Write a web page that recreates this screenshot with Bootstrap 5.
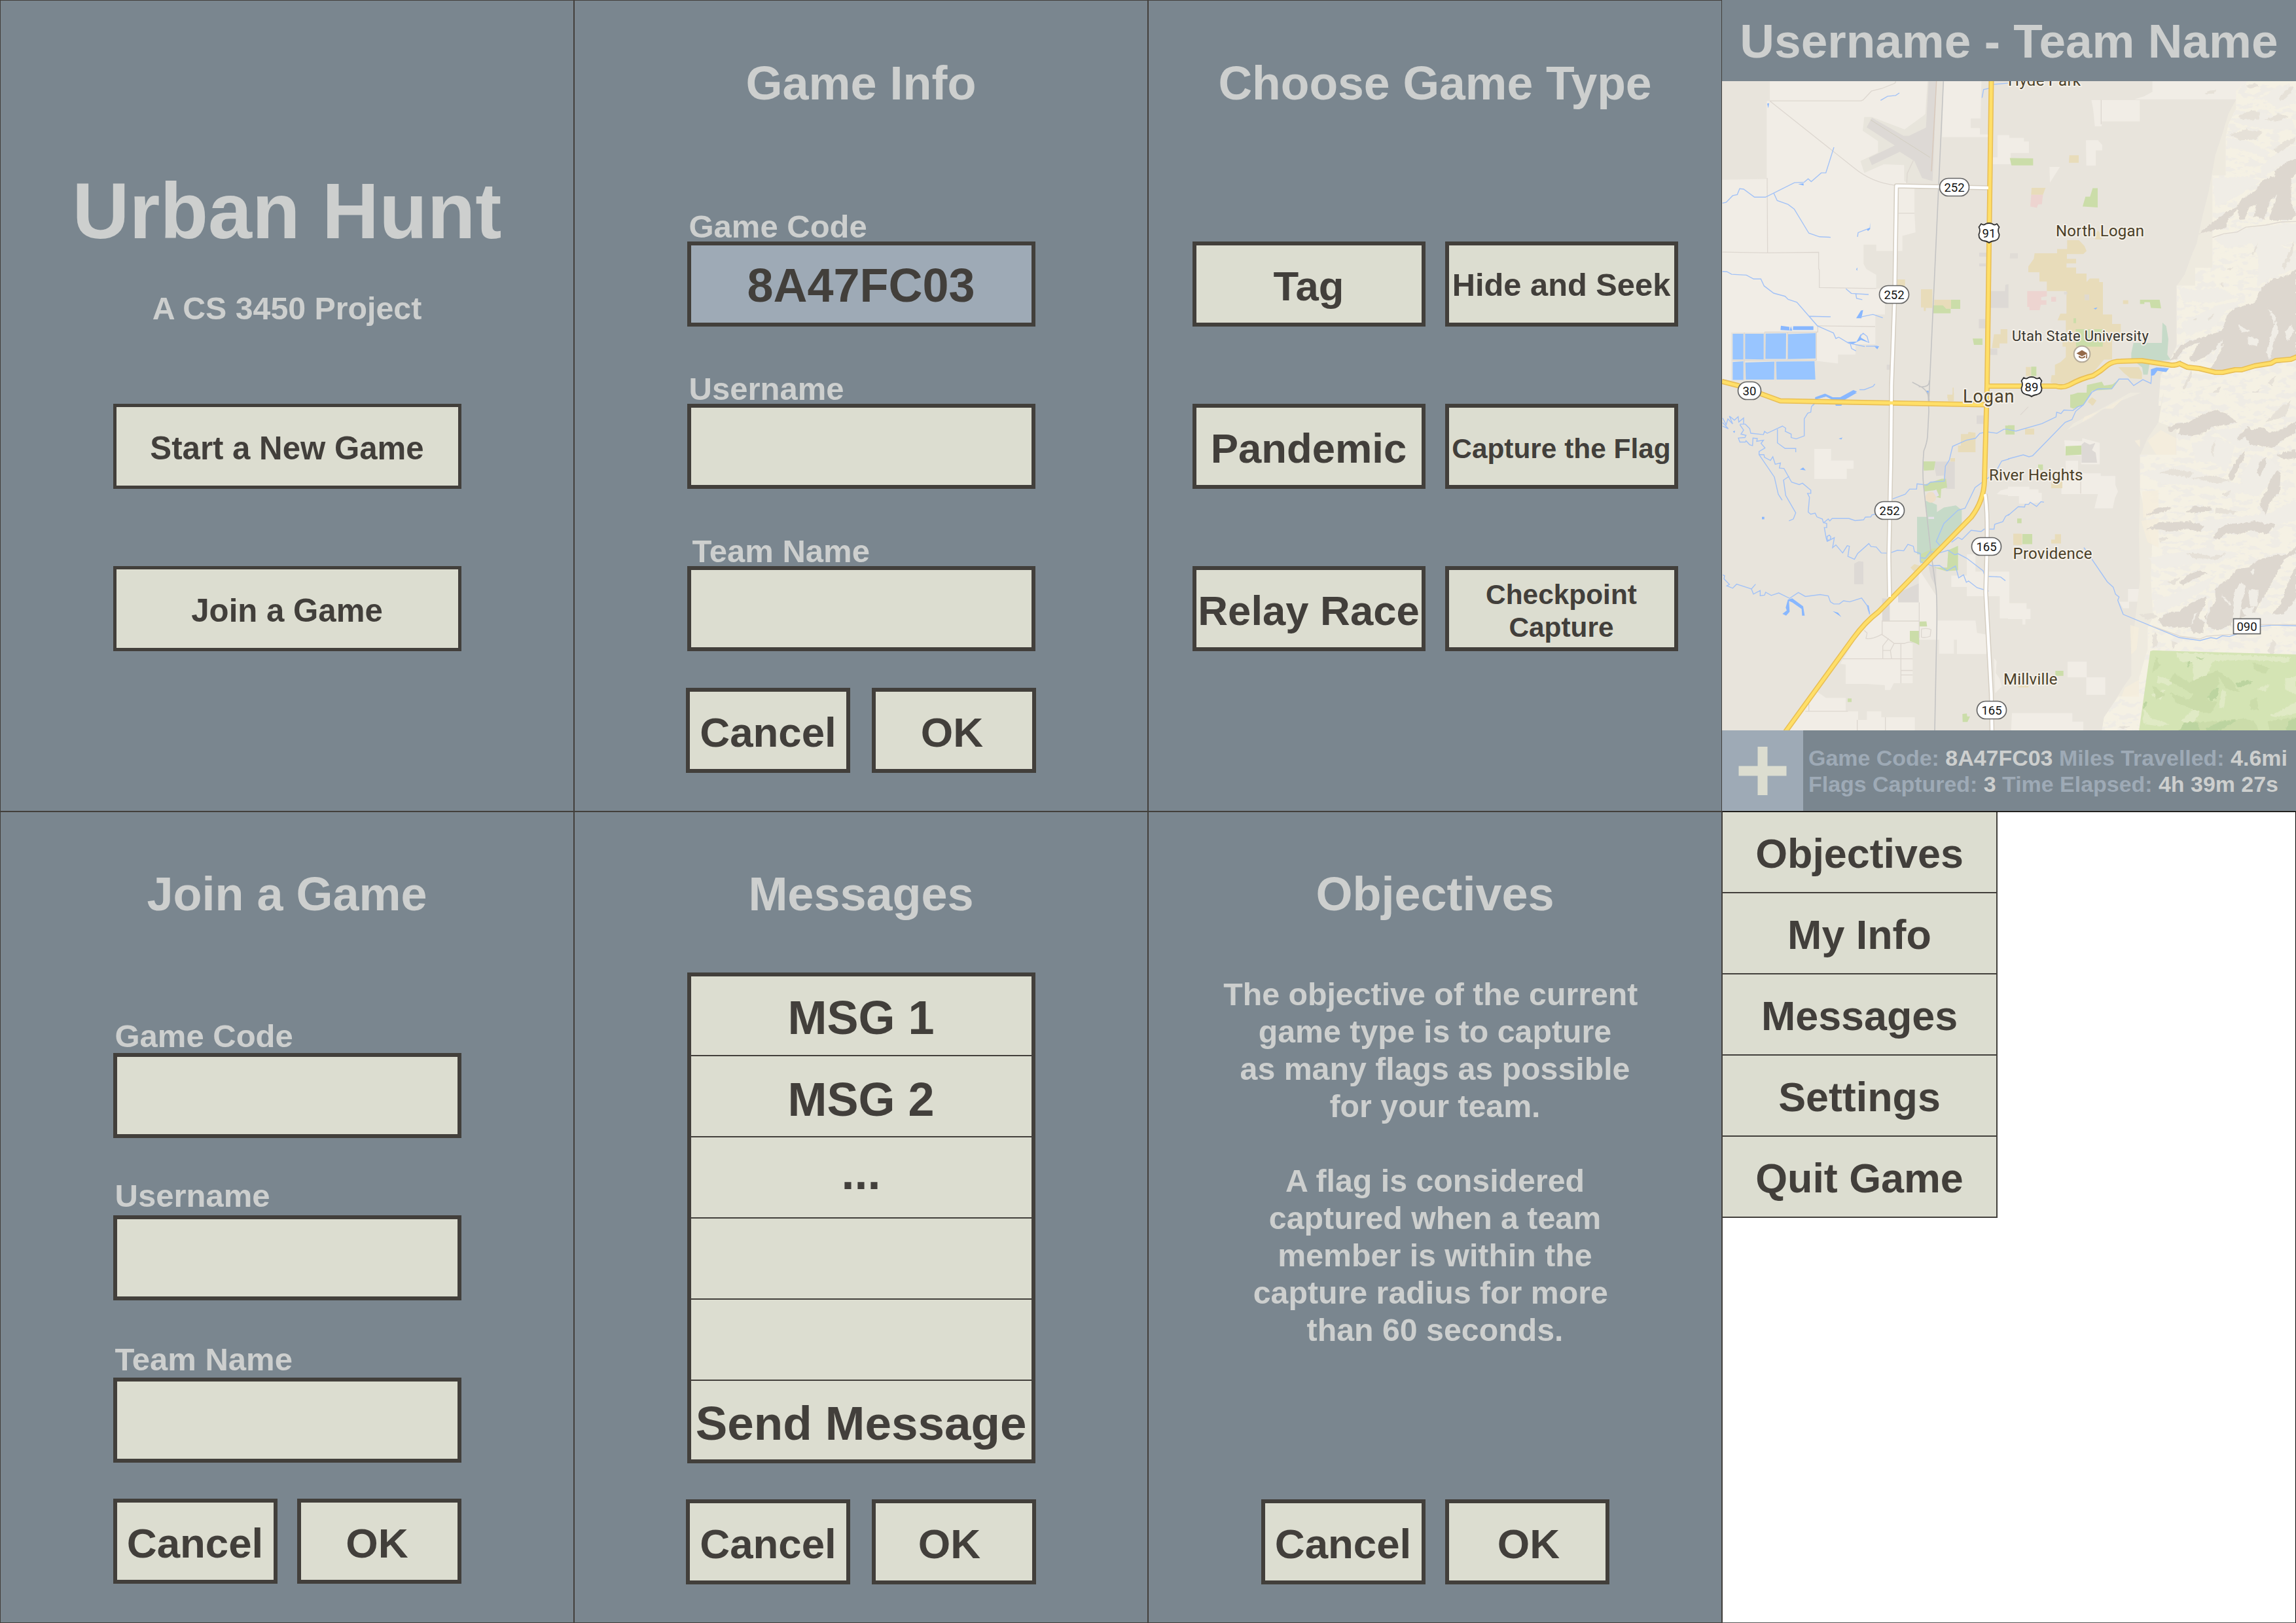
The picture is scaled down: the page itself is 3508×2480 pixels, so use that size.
<!DOCTYPE html>
<html lang="en">
<head>
<meta charset="utf-8">
<title>Urban Hunt</title>
<link href="https://cdn.jsdelivr.net/npm/bootstrap@5.3.0/dist/css/bootstrap.min.css" rel="stylesheet">
<style>
:root{--slate:#7a868f;--ink:#423f3b;--cream:#dcddd0;--fog:#cdcfce;--steel:#9eaab6}
body{width:3508px;height:2480px;background:#fff;font-family:"Liberation Sans",Arial,sans-serif;font-weight:700;color:var(--ink);overflow:hidden}
.screen{width:877px;height:1240px;background:var(--slate);border:1px solid var(--ink);color:var(--fog)}
.screen-map{border:0;border-bottom:1px solid var(--ink)}
.screen-menu{background:#fff;border-color:#000;border-left-color:var(--ink);border-bottom-color:#555}
.scr-title{font-size:72px;line-height:80px;height:80px;font-weight:700;margin:86px 0 0;text-align:center;white-space:nowrap}
.long-title{font-size:71.5px}
.row2 .scr-title{margin-top:85px}
.brand{font-size:120.5px;line-height:140px;font-weight:700;margin:252px 0 0}
.tagline{font-size:48.3px;line-height:56px;margin:50px 0 118px}
.tile{display:flex;align-items:center;justify-content:center;height:130px;padding:6px 0 0;border:6px solid var(--ink);border-radius:0;background:var(--cream);color:var(--ink);font-size:64px;line-height:1.15;font-weight:700;white-space:nowrap}
.form-control.tile{text-align:center;font-size:72px;padding-top:3px}
.form-control.tile:disabled{background:var(--steel);color:var(--ink);opacity:1}
.t49{font-size:49.2px}.t42{font-size:42.5px;line-height:50px}
.w-main{width:532px}
.stack-home{gap:118px}
.stack-home .tile{border-width:5px}
.fields{gap:70px;margin-top:154px}
.fld{display:block;height:48px;line-height:50px;font-size:49px;padding-left:3px}
.row2 .fields{margin-top:155px}
.lift-3{line-height:44px}.lift-5{line-height:40px}.lift-7{line-height:36px}
.actions{margin-top:56px;gap:30px}
.row2 .actions{margin-top:55px}
.actions .tile{width:251px;font-size:63.6px}
.wide{gap:33px}
.nl-3{padding-right:6px}.nl-7{padding-right:14px}.nr-3{padding-left:5px}
.types{display:grid;grid-template-columns:356px 356px;gap:118px 30px;margin-top:202px}
.types .tile{font-size:63.4px;padding-top:7px}.types .t49{font-size:48.8px;padding-top:2px}.types .t42{font-size:42.4px;line-height:50px;padding-top:7px}
.msgs{height:750px;margin-top:80px;border:6px solid var(--ink);border-radius:0}
.msgs .list-group-item,.menu .list-group-item{display:flex;align-items:center;justify-content:center;background:var(--cream);color:var(--ink);border-color:var(--ink);padding:5px 0 0;line-height:1;white-space:nowrap;border-radius:0}
.msgs .list-group-item{flex:none;height:124px;font-size:72px;border-width:0 0 2px}
.msgs .list-group-item:first-child{height:122px}
.msgs .list-group-item:nth-child(2){padding-top:9px}
.msgs .list-group-item:last-child{height:120px;border:0;padding-top:10px;font-size:72.8px}
.msgs .list-group-item.ell{padding:0 0 14px}
.brief{font-size:48.3px;line-height:57px;margin:85px 0 0;text-align:center;white-space:nowrap}
.row2 .brief-end{margin-top:230px}
.menu{width:420px}
.menu .list-group-item{height:124px;font-size:62.8px;border-width:0 2px 2px 0}
.topbar{height:124px;font-size:73px;line-height:1;padding:1px 0 0 0;white-space:nowrap}
.map{display:block;width:877px;height:992px;background:#e8e4dc}
.botbar{height:123px}
.plus{width:124px;height:123px;background:var(--steel)}
.stats{font-size:33.95px;line-height:40px;padding:1px 0 0 8px;white-space:nowrap;color:var(--steel)}
.stats b{color:var(--fog)}
.map path,.map polyline,.map line{vector-effect:non-scaling-stroke}
.lt{fill:#f1ede6}.gy{fill:#ddd9d5}.tn{fill:#e8dcba}.gn{fill:#cbdda9}.tl{fill:#c6dac8}.pk{fill:#edd4d0}.bl{fill:#88b7ff}
.mt{fill:#f5f1e4;filter:url(#slopes)}.sh{fill:#ddd7cf;filter:url(#rough)}.s2{fill:#e6e1d8;filter:url(#rough)}.hl{fill:#f0ede6;filter:url(#rough)}
.wt{fill:none;stroke:#a2c2f7;stroke-width:1.4}
.ln{fill:none;stroke:#ddd7d0;stroke-width:1.3}
.rl{fill:none;stroke:#c4c4c4;stroke-width:1.6}
.yo{fill:none;stroke:#e9bf55;stroke-width:8;stroke-linejoin:round}
.yi{fill:none;stroke:#ffdf68;stroke-width:4.8;stroke-linejoin:round}
.wo{fill:none;stroke:#d5cec2;stroke-width:7.5;stroke-linejoin:round}
.wi{fill:none;stroke:#fff;stroke-width:4.4;stroke-linejoin:round}
.town{font-family:Roboto,sans-serif;font-weight:400;font-size:24px;fill:#4b4028;stroke:#f4f0e8;stroke-width:4;paint-order:stroke;stroke-linejoin:round}
.num{font-family:Roboto,sans-serif;font-weight:400;font-size:18.5px;fill:#111;text-anchor:middle}
.pill{fill:#fff;stroke:#666;stroke-width:1.7}
</style>
<script src="https://cdn.jsdelivr.net/npm/bootstrap@5.3.0/dist/js/bootstrap.bundle.min.js"></script>
</head>
<body class="d-flex flex-wrap align-content-start">

<section class="screen d-flex flex-column align-items-center">
  <h1 class="brand">Urban Hunt</h1>
  <p class="tagline">A CS 3450 Project</p>
  <div class="stack-home d-flex flex-column w-main">
    <button class="btn tile t49">Start a New Game</button>
    <button class="btn tile t49">Join a Game</button>
  </div>
</section>

<section class="screen d-flex flex-column align-items-center">
  <h2 class="scr-title">Game Info</h2>
  <div class="fields d-flex flex-column w-main">
    <div><label class="fld">Game Code</label><input class="form-control tile" value="8A47FC03" disabled></div>
    <div><label class="fld">Username</label><input class="form-control tile"></div>
    <div><label class="fld ps-2">Team Name</label><input class="form-control tile"></div>
  </div>
  <div class="actions wide d-flex"><button class="btn tile">Cancel</button><button class="btn tile nl-3">OK</button></div>
</section>

<section class="screen d-flex flex-column align-items-center">
  <h2 class="scr-title long-title">Choose Game Type</h2>
  <div class="types">
    <button class="btn tile">Tag</button><button class="btn tile t49">Hide and Seek</button>
    <button class="btn tile">Pandemic</button><button class="btn tile t42">Capture the Flag</button>
    <button class="btn tile">Relay Race</button><button class="btn tile t42">Checkpoint<br>Capture</button>
  </div>
</section>

<section class="screen screen-map d-flex flex-column">
  <header class="topbar d-flex align-items-center justify-content-center">Username - Team Name</header>
  <svg class="map" viewBox="2631 124 877 992">
    <defs>
      <filter id="rough" x="-5%" y="-5%" width="110%" height="110%"><feTurbulence type="fractalNoise" baseFrequency=".07" numOctaves="3" seed="4"/><feDisplacementMap in="SourceGraphic" scale="13" xChannelSelector="R" yChannelSelector="G"/></filter>
      <filter id="slopes" x="0" y="0" width="100%" height="100%" color-interpolation-filters="sRGB"><feTurbulence type="fractalNoise" baseFrequency=".02 .045" numOctaves="3" seed="11"/><feColorMatrix values="0 0 0 0 .937  0 0 0 0 .925  0 0 0 0 .898  14 0 0 0 -7.4"/><feComposite in2="SourceGraphic" operator="in" result="t"/><feMerge><feMergeNode in="SourceGraphic"/><feMergeNode in="t"/></feMerge></filter>
    </defs>
    <!-- north-west ground -->
    <g transform="translate(2630 0) scale(.33333 .39541)">
      <path class="lt" d="M222 314H945L935 440 850 530 840 700 885 726V820L890 898 830 912V970H710V945H652V1020L665 1040 710 1062V1115H750V1215H706V1330H615V1370H535V1405L436 1395V1285H45V1470L3 1465V695L208 692V390H222Z"/>
      <path class="lt" d="M1018 314H1192L1188 458H1143V495H1185V520H1225V530H1012ZM1266 522H1320V635H1244V608H1266Z"/>
      <path fill="#e8e5dc" d="M655 452H690L840 500 938 440V700H838V638L745 635 655 668 638 622 718 590V545L648 505Z"/>
      <path class="gy" d="M690 455 835 525H860L938 493 950 314H988L968 700 920 688 885 622 818 587 690 638 676 610 795 562 666 492Z"/>
      <path fill="none" stroke="#d9c9bb" stroke-width="1.4" d="M986 314 963 662"/><path fill="none" stroke="#d2cec0" stroke-width="1" d="M684 463 956 608"/>
      <path class="ln" d="M222 390H640L650 386 688 352 735 342 795 322 800 314M222 390 610 650Q690 705 795 716M210 688 212 976M5 974 212 977 446 975V1040L449 1042V1111L710 1115M440 1259 705 1262M442 1259V1283H198M436 1285V1392M812 824H885M850 708 852 670 880 620M304 1285V1390M198 1285V1390M105 1285V1468M247 1395V1468M50 1392H434"/>
      <path class="gy" d="M1182 976H1215V992H1182ZM1182 1018H1212V1029H1182ZM1232 1125H1300L1302 1100 1316 1098V1190H1232ZM1180 1233H1210V1269H1180ZM1232 1347H1265V1372H1232ZM758 1409H785V1429H758Z"/>
      <path class="tn" d="M915 1118H967V1190H937V1202H928V1188H915ZM976 1158H1053V1193H976ZM806 1080H842V1105H806ZM1250 1292H1280V1272H1311V1327H1275V1345H1240ZM1035 1525H1060V1498H1065V1550H1040Z"/>
      <path class="gn" d="M971 1180H1015L1030 1193H1053V1158H1095V1194H1051V1211H971ZM1152 1308H1197V1333H1158Z"/>
      <g fill="#98c5ff"><path d="M52 1290H101V1389H52ZM109 1290H194V1389L109 1388ZM203 1289 297 1288 296 1387H202ZM306 1291 432 1287V1385L305 1388ZM52 1399 101 1396V1468H52ZM110 1401 243 1397 242 1467H112ZM251 1397 427 1396 431 1467H253Z"/></g>
      <path class="bl" d="M273 1259 312 1263V1277L271 1275ZM329 1261H422V1275H328ZM313 1278 319 1260 325 1278ZM210 400 219 399 215 418ZM352 711 377 708V717ZM665 885 680 880 682 860V885L672 893ZM618 1040 624 1034 622 1047ZM640 1200 650 1198 642 1230 618 1230ZM575 1322 620 1320 640 1290V1305L680 1325 640 1314 600 1330ZM700 1337 723 1338 715 1350ZM430 1535 475 1521 510 1535 545 1535 605 1507 622 1513 565 1542 550 1568H525L520 1548 480 1532 430 1544ZM938 1510 950 1510V1526Z"/>
      <path class="wt" d="M5 785 22 782 52 756 73 752 84 729 102 731 152 762H202L335 706 380 704 398 691 412 702 458 668H479L516 569M240 746 256 775 306 790 334 808 401 901 450 915 501 917M5 1049 26 1050 47 1060 115 1063 148 1078H181L196 1105 240 1133 292 1145 306 1157 346 1168 440 1259 514 1287 525 1308 538 1303 583 1326 658 1339M403 1222 501 1224M730 388 762 372 799 369 816 359M624 915 627 899 666 886M571 1116 596 1134 675 1138M616 1134 620 1153 646 1158M638 1225 695 1215 740 1228M590 1325 597 1347 617 1356M663 1338H716M636 1300 650 1288 668 1300 676 1325M633 1506H655L695 1493 704 1484M1195 378 1202 346 1228 341M1248 326 1320 321M418 1568 440 1548"/>
      <path class="rl" d="M1018 314 950 1568M875 1477 905 1490Q960 1510 952 1568M905 1494Q955 1500 953 1470"/>
    </g>
    <!-- north-east ground -->
    <g transform="translate(3068 0) scale(.33333 .39541)">
      <path class="lt" d="M662 314H1110V384H580L625 372 662 355ZM382 387H604V469H430V488H398L390 420ZM0 533H73V547H96V591H12V635L0 632ZM357 542H412L432 560V581H402V640H359ZM190 645H238L192 706Z"/>
      <path fill="#eeeadf" d="M1045 385 1010 440 985 510 950 600 920 740 890 840 865 940 840 990 810 1060 775 1103V1330L740 1395 700 1450 690 1568H1320V314H1110Z"/>
      <path class="mt" d="M1100 314H1320V1568H690L700 1450 740 1400 773 1340V1103H858V1035H937V678H998V530L1010 480 1045 420V350Z"/>
      <path class="hl" d="M1105 385H1180L1230 420 1320 400V350L1240 330 1180 370ZM1030 470 1110 430 1190 440 1300 460 1320 500 1200 500 1110 490ZM1000 530 1100 545 1200 590 1180 610 1080 580 1010 570ZM937 690 1100 680 1160 700 1050 760 950 800ZM780 1110 860 1120 960 1110 1060 1150 930 1170 800 1160ZM790 1250 960 1180 1100 1160 1000 1200 950 1260 820 1300ZM940 920 1100 880 1320 862V930L1250 950 1320 980V1040L1200 1075 1140 1110 1150 1000 1120 940 1000 960ZM1160 640 1250 580 1320 560V615L1240 640 1160 690Z"/>
      <path class="s2" d="M1095 330 1135 320 1150 335 1110 342ZM1240 380 1290 335 1310 335 1290 365 1250 392ZM1055 450 1120 425 1155 435 1150 462 1070 460ZM1175 465 1240 440 1290 450 1230 470ZM1015 520 1090 500 1170 510 1130 540 1065 542ZM1215 580 1260 550 1320 530V545L1270 575 1235 592ZM1120 980 1145 940 1140 965 1125 985ZM1255 1030 1290 970 1310 930 1305 980 1265 1045ZM970 1100 985 1090V1110ZM915 1235 945 1210 940 1225 920 1240ZM850 1240 865 1228V1240ZM900 362 925 350 958 348 940 362ZM1005 1040 1030 1030 1020 1045ZM800 1500 840 1430 845 1450 810 1505ZM1090 1530 1160 1500 1130 1540ZM1190 1480 1230 1450 1210 1490ZM930 1520 980 1490 960 1530Z"/>
      <path class="sh" d="M875 902 940 858 1000 820 1050 800 1070 770 1130 740 1170 695 1225 680V660L1270 630 1320 615V670L1298 690V785L1320 830 1300 850H1195L1215 800 1235 750 1200 780 1175 850 1140 835 1125 840 1140 790 1105 800 1085 848 1060 850 1055 810 1010 845 1000 880 940 890Z"/>
      <path class="sh" d="M740 1395 790 1335 850 1315 930 1292 980 1280 1005 1215 1040 1190 1130 1170 1165 1110 1210 1080 1280 1065 1320 1040V1375L1215 1400 1100 1415 980 1440 925 1430 960 1380 990 1330 940 1355 900 1380 850 1400 830 1390 880 1320 810 1345 770 1390Z"/>
      <path class="hl" d="M1215 1260 1230 1240 1240 1280 1215 1330 1200 1390 1185 1360ZM1050 1250 1075 1265 1110 1280 1070 1285ZM1270 1280 1300 1255 1310 1280 1280 1320ZM1100 1300 1150 1310 1140 1340 1100 1330ZM1190 1190 1230 1225 1220 1250ZM960 1330 985 1310 960 1380 930 1400Z"/>
      <path class="tn" d="M271 928H325L350 950 360 970 345 982H270V1000H312V1018H268V1034H312V1057H360V1090L375 1076H418V1090H435V1215H477V1252H517V1290H477V1390H440L390 1440 300 1475 250 1495 195 1478 200 1450H215V1410L240 1400 265 1380V1340H250V1320H265V1238H227L240 1212H268V1125H178V1088H144V1052H93V1030L118 1000 122 979H225V962H271ZM281 600H324V629H279ZM108 726H172L160 753H106ZM527 1160H551V1175H527ZM505 1419H600L614 1440V1465L560 1462 530 1440ZM82 1418H104V1453H82ZM402 905 412 890 430 910V925H400ZM368 1548 385 1535 405 1548 385 1568Z"/>
      <path class="gn" d="M8 611 115 612V639H16ZM388 727H411V802L342 798 355 760 376 760ZM310 1272H434V1340H312ZM605 1158H695L702 1192 655 1190 650 1168H625V1175H605ZM300 1230H312V1249H300ZM106 1417H130V1453H106ZM362 1488 430 1475 440 1490 480 1485 515 1462 475 1505 385 1510 345 1568H285V1525L360 1520Z"/>
      <path class="tl" d="M708 1247 725 1260 735 1310 730 1370 745 1390 700 1395 650 1400 640 1448H620L615 1420 585 1400 565 1385V1365L575 1325H705Z"/>
      <path class="pk" d="M106 753H160L155 790H138L132 803L102 798ZM88 1125H178V1145L152 1148V1160H176V1178H150L145 1199H98V1186H88ZM198 1147H220V1166H198Z"/>
      <path class="gy" d="M10 979H45V999H8ZM257 1128H272V1138H257ZM350 1138H372V1160H352Z" opacity=".8"/>
      <path class="bl" d="M655 1427 680 1420 738 1423 725 1438 685 1433 670 1450 655 1453ZM392 1192 410 1188 402 1196ZM784 1396 790 1393 796 1398Z"/>
      <path class="wt" d="M658 1453 655 1482 618 1467 576 1490 550 1465H508L476 1502 412 1503 385 1515 345 1564M1320 1385 1250 1400 1200 1406"/>
      <path class="ln" d="M427 386V480M937 918 990 903 1050 897 1090 878 1180 870 1250 858 1320 856"/>
    </g>
    <!-- south-west ground -->
    <g transform="translate(2630 600) scale(.33333 .40816)">
      <path class="lt" d="M426 211H503V254H606V285H575V323H426ZM680 835 775 775 905 714V660L985 760V925H877V1088H790L775 1113H750V1095L665 1090H570V1018L545 1015ZM440 1120 480 1143H570V1193H627V1225H667V1193H733V1215H887V1268H300ZM992 853H1165L1172 900 1215 905V978H1080V925H1066V977H998V925H990ZM1054 685H1125V605H1165V670H1320V845H1276V762H1125V727H1054ZM1262 380 1280 366 1320 358V384ZM1250 995 1262 1005 1258 1050 1275 1070 1285 1100 1255 1125Z"/>
      <path class="gy" d="M609 640 630 631 651 633V717H609ZM972 258H1070V360H1030L1020 310 985 312ZM1170 85H1203V117H1170ZM737 770 772 772V855H737ZM810 750 905 714V785H810ZM950 650 985 650 985 730 960 690Z"/>
      <path class="tn" d="M1098 155H1130L1133 147 1165 150V223H1085V198H1098ZM1050 245H1071V258H1050ZM867 655 885 642 912 648 905 665 890 675ZM1035 15H1060V0H1066V30L1040 28Z"/>
      <path class="tl" d="M897 465H945L935 405 960 410 988 420V447L1020 430 1075 422 1102 440V490L1030 560 960 610 897 605Z"/>
      <path class="gn" d="M926 257H981L975 290 928 292ZM928 345 1010 322 1030 322 1035 355 1008 360 1005 395 985 390 980 365 930 370ZM912 605 965 585 990 580 960 620 912 640ZM1040 590 1085 573V665L1030 668 975 655 1035 655ZM907 857 940 856 943 875H907ZM864 892H907V945L890 938 864 930ZM579 1145H597V1158H579ZM1105 1203 1125 1201 1127 1212H1140L1128 1233H1106ZM1301 123H1320V157H1303Z"/>
      <ellipse cx="960" cy="392" rx="24" ry="20" fill="#eedfc9"/><path fill="#e6e0e8" d="M970 370 985 362 998 385 985 390ZM949 465H975V473H949Z"/>
      <path class="bl" d="M430 20 475 5 510 18 545 20 600 0H622L565 27 548 48H524L520 32 480 14 432 26ZM538 172 555 168 550 175ZM360 288 375 280 387 291ZM186 465H197V474H186ZM53 145 63 142 60 151ZM305 775 325 770 375 800 382 835H370L368 810 325 785 310 780 313 820 297 835 280 828 300 815 295 805ZM510 818 535 824 550 840ZM669 795 675 797 682 828 672 815Z"/>
      <path class="wt" d="M6 95 22 120 30 98 52 117 37 88 60 103 77 90 80 110 102 95V118H85L110 118 130 135 135 152 193 157 198 145 210 152 280 125 295 133 293 145 320 155V168L343 173 380 162V98L396 77 410 73 413 52 430 38M6 112 32 135 6 125M85 120 102 140 90 155 113 160 108 168 78 170 85 185H110L113 180 130 195 143 198 145 170 165 172 162 182 193 178 182 190 200 207 173 220V232H195L198 242 225 254 236 240 247 268 271 263 266 282 287 284 322 335 357 344 372 339 410 365V377H395L404 392 398 447 410 455 430 451 438 465 463 473 467 485 483 490V505H472L480 542 485 557 518 543 510 580 525 570 556 600 577 573 587 575 580 613 610 624 625 602 676 565 686 576 710 578 733 600 770 601 808 590 836 592 855 568 880 575 885 595 912 602V633L965 648 1000 647 1035 667 1073 649 1088 693 1110 682 1123 710 1133 705 1172 730 1225 743M257 137V188L292 209H341V223M173 232 243 316 261 380 279 403M311 313 285 327 295 385 341 450 330 473 310 480M467 488 490 473 497 480 508 471H585L613 479 652 476 660 466 685 465 690 458 705 455M785 398 843 380 863 361H895L897 341 943 346 958 335 1022 331 1027 275 1045 252 1060 201 1123 178 1165 171 1185 152 1220 147 1263 152 1295 137H1320M1003 573 985 557 1020 490 1085 440 1117 433 1163 355 1255 300 1285 256 1320 248M1055 560 1085 542 1103 550 1145 515 1190 520 1205 511H1250L1253 493 1290 483 1303 463 1320 455M960 595 1000 600 1040 590 1070 607 1085 603 1125 620 1200 667 1205 680M1225 688 1280 690 1302 704M915 618 935 620 960 593M6 682 15 685 12 697 37 718 25 723 52 732 70 717 138 735 157 717M138 735 147 754 178 741V760L198 758 203 747 229 759 263 750 313 770 353 748 385 763 453 756 490 761 500 783 515 791H541L560 779 588 783 643 769 668 797 680 830M485 538 495 533 502 540 498 552 485 552Z"/>
      <path class="ln" d="M655 890 668 900 663 920Q690 925 735 905 780 930 792 939H840Q860 930 877 936M737 905V855H907V785M907 857V918M917 885Q945 880 961 887L957 912Q930 920 917 915ZM767 920 740 948V995M740 965H775L780 995M792 939 775 965M823 939V1088M825 1040H877M825 1057H877M555 996H877M385 1193H580M401 1165V1193M623 1225V1268M752 1215V1268"/>
      <path class="rl" d="M948 0 951 70 945 165Q942 190 928 218 920 290 927 350L960 593 985 740Q990 800 987 900L978 1268"/>
    </g>
    <!-- south-east ground -->
    <g transform="translate(3068 600) scale(.33333 .40816)">
      <path class="lt" d="M0 352H98V362H140V375H155V410L100 415H50V387H0ZM264 255H321V302H425V312H492V345L504 370 490 395 480 433H396L412 380H245V330L264 320ZM0 788H85V810H103V848H80V868H66V848H0ZM273 1007H361V1066H446V1131H359V1066H273ZM18 1200H295V1232H345V1268H14ZM550 735H665V782H555V807H527L510 783H550ZM258 178 340 182V170L420 188V268H335V235H264Z"/>
      <path fill="#eeeadf" d="M705 20 690 110 640 170 605 235V370L600 530 605 700 580 870 565 960V1060L530 1100 440 1220 430 1268H1320V0H715ZM270 140 300 115 380 80 450 50 560 0H610L520 30 430 65 380 95Z"/>
      <path class="mt" d="M715 0H1320V1268H430L440 1215 505 1138 600 1130V1070L640 960V880L665 840 655 700 660 570 605 365V232H772V135L690 110Z"/>
      <path class="hl" d="M605 300 800 270 950 320 1100 350 1060 380 900 350 700 340ZM640 620 900 580 1060 600 960 640 860 640 700 660ZM665 780 800 740 960 680 900 740 790 790 680 830ZM700 500 1000 470 1200 450 1320 400V480L1200 500 900 520ZM1130 230 1180 240 1250 280 1200 330 1150 390 1080 380 1070 310ZM840 190 960 170 1040 200 1000 300 940 260 860 260ZM1230 830 1320 760V850L1180 870 1080 880V830ZM940 140 1060 130 1120 200 1060 210Z"/>
      <path fill="#f5eddc" d="M640 180 700 140 770 170V232H680ZM615 370 690 365V450L620 470ZM610 480 690 470V580L640 560ZM560 870 600 880 590 960 565 980ZM535 1105 600 1075V1138H520ZM350 90 420 70 340 110ZM440 60 530 20 480 60ZM580 180 605 175V205Z" opacity=".8"/>
      <path class="s2" d="M690 300 760 285 850 300 830 318 740 305ZM930 210 950 175 940 240ZM840 320 940 310 1020 330 960 340ZM820 600 870 600 930 615 1000 600 960 625 850 622ZM660 905 680 900 685 945 665 955ZM750 930 775 935 755 965ZM1190 970 1215 920 1230 940 1215 980ZM500 1250 560 1246 530 1260ZM950 430 1055 445 1030 455 950 450ZM730 710 790 690 760 720ZM980 380 1020 365 1005 392ZM600 830 660 825 690 840 640 850ZM1180 110 1240 60 1300 30 1270 90ZM690 545 740 540 700 560Z"/>
      <path class="sh" d="M735 130 770 115 830 110 880 85 950 65 1000 78 1050 110 1000 120 930 130 890 155 830 162 780 155 790 135 740 145ZM1050 170 1100 125 1120 140 1160 130 1200 150 1250 140 1320 105V150L1260 175 1215 208 1170 200 1110 195 1090 165 1060 180ZM1010 310 1050 250 1085 215 1080 250 1050 290 1030 330 1012 325ZM1140 300 1155 260 1185 240 1180 270 1155 315ZM1155 420 1160 400 1185 370 1200 330 1230 290 1250 300 1245 370 1200 410 1180 460ZM1230 235 1320 210V245L1270 250ZM815 450 850 425 930 428 940 440 870 450ZM630 460 690 430 750 428 740 440 660 455ZM635 510 700 485 840 483 900 500 880 520 820 510 740 520 700 512ZM940 545 965 510 1010 490 1080 490 1130 480 1180 490 1230 490 1190 530 1110 515 1060 530 1000 525 970 550ZM785 710 830 680 880 665 915 675 870 690 800 720ZM950 780V735L980 715 1020 690 1050 660 1100 655 1150 625 1210 612 1280 605 1320 575V600L1270 620 1230 680 1190 740 1130 820 1080 840 1030 850 1020 870 960 890 920 880 900 840ZM690 850 740 820 785 820 830 790 910 760 900 800 870 840 900 860 895 900 850 900 835 880 770 880 710 875ZM1210 830 1250 790 1270 740 1300 680 1320 650V770L1260 830Z"/>
      <path class="hl" d="M1040 740 1070 710 1090 730 1070 790 1060 850 1030 850 1035 780ZM1100 740 1145 735V800L1110 800ZM1070 810 1130 800 1110 840 1080 830ZM980 755 1025 795 1020 800 985 765ZM1110 670 1130 660 1125 680ZM850 830 870 820 840 870ZM940 780 910 850 920 780Z"/>
      <path fill="#d4e4b4" d="M652 968 665 965 1320 980V1268H600Z"/>
      <g filter="url(#rough)">
        <path fill="#e0eac5" d="M770 975 880 975 980 980 1120 984 1300 990 1280 1010 1100 1000 940 1005 900 1080 850 1090 845 1010 790 1005ZM690 1060 760 1080 740 1095 680 1085ZM980 1110 1000 1120 990 1180 965 1180ZM1270 1070 1320 1060V1130L1270 1110ZM1200 1210 1320 1160V1200L1230 1215ZM620 1180 660 1220 740 1240 700 1250 620 1240ZM1140 1110 1200 1090 1180 1120ZM860 1170 900 1160 850 1240 790 1230 830 1200ZM655 1130 720 1110 700 1150Z"/>
        <path fill="#cbdcaa" d="M760 1050 830 1085 960 1040 970 1090 910 1150 960 1160 930 1200 880 1195 770 1160 740 1120 830 1150 850 1130 740 1080ZM950 1040 1020 1070 1060 1120 1000 1110ZM1120 1010 1200 1030 1180 1050 1130 1040ZM1190 1230 1320 1215V1268H1200ZM780 1268 820 1235 960 1230 1080 1220 1130 1230 1150 1268ZM670 1010 680 990 700 1020 660 1050ZM660 1095 720 1130 680 1150ZM1110 1150 1140 1140 1150 1190 1110 1185Z"/>
        <path fill="#bcd4a0" d="M915 1140 940 1110 970 1105 960 1140 930 1155ZM1040 1090 1100 1075 1120 1085 1060 1105ZM780 1268 810 1235 870 1238 880 1268ZM910 1255 970 1232 1050 1225 1000 1250 960 1268H910ZM1270 1268 1290 1225 1320 1218V1268ZM820 1003 840 1010 825 1030ZM625 1160 640 1155 620 1190ZM860 990 900 995 880 1002Z"/>
      </g>
      <path class="gn" d="M0 122H30V157H0ZM285 10 320 0H380L345 45 300 60 285 55ZM264 200 337 198V232L264 235ZM138 269H160V290H138ZM66 529H111V567H66ZM42 471H62V489H42ZM217 1041H254V1060H217Z"/>
      <path class="tn" d="M78 135H120V157H78ZM365 35 385 20 405 30 390 48ZM198 330H249V358H198ZM24 528H64V570H24ZM215 530H243V565H198V550H215ZM47 1080H94V1104H47Z"/>
      <path class="gy" d="M337 195 350 185 375 195 400 188 385 215 402 225 408 262H337Z"/>
      <path class="wt" d="M0 138 36 144 155 116 220 91 223 73 243 78 256 65 297 67 320 53 345 46 383 0M345 46 310 70 293 101 262 111 113 236 96 240 70 233 0 248M0 460 47 427 76 428 79 418H95L102 410 131 426 151 408 165 410M348 580 455 708 482 728 493 755 509 765 503 777 528 830 785 917 880 928 930 917 957 921 983 910 1015 913 1050 903M1158 875 1215 870 1320 873"/>
      <path class="ln" d="M333 330V378M57 83 93 53M660 873 790 912 880 922 910 912 985 907 1030 905M1158 868 1320 868"/>
    </g>
    <!-- roads -->
    <g><path class="wo" d="M3039 287 2897.500 284 2895 450 2890 590 2889 700 2886 850 2887 912"/><path class="wo" d="M3033 755Q3037 780 3036 834L3034 905 3042.500 1060 3043.500 1118"/>
      <path class="yo" d="M2631 583 2655 589 2694 603 2720 612.500 3034 618.500M3042.500 122 3036 590 3032 735Q3031 765 3012 790L2870 935Q2850 950 2831 976L2728 1118M3036 590H3068 3141Q3152 593 3162 588 3180 578 3198 574 3210 567 3220 558 3228 552 3240 552L3272 551 3318 558Q3326 558 3330 555.500L3342 561 3360 563 3385 569H3396L3415 565 3425 565 3445 559 3470 555 3477 551 3500 549 3510 545"/>
      <path class="wi" d="M3038 287 2897.500 284 2895 450 2890 590 2889 700 2886 850 2887 912"/><path class="wi" d="M3033 755Q3037 780 3036 834L3034 905 3042.500 1060 3043.500 1118"/>
      <path class="yi" d="M2631 583 2655 589 2694 603 2720 612.500 3034 618.500M3042.500 122 3036 590 3032 735Q3031 765 3012 790L2870 935Q2850 950 2831 976L2728 1118M3036 590H3068 3141Q3152 593 3162 588 3180 578 3198 574 3210 567 3220 558 3228 552 3240 552L3272 551 3318 558Q3326 558 3330 555.500L3342 561 3360 563 3385 569H3396L3415 565 3425 565 3445 559 3470 555 3477 551 3500 549 3510 545"/></g>
    <!-- place names -->
    <g class="town">
      <text x="3068" y="130.500" textLength="111">Hyde Park</text>
      <text x="3141" y="360.500" textLength="135">North Logan</text>
      <text x="3074" y="521" textLength="209" style="font-size:22px;fill:#38362f">Utah State University</text>
      <text x="2999" y="615" textLength="78.500" style="font-size:27px">Logan</text>
      <text x="3039" y="733.500" textLength="143.500">River Heights</text>
      <text x="3075.500" y="853.500" textLength="121">Providence</text>
      <text x="3061" y="1045.500" textLength="82.500">Millville</text>
    </g>
    <!-- route shields -->
    <rect class="pill" x="2963.500" y="272.500" width="45" height="27" rx="13.500"/><rect class="pill" x="2871.500" y="436.500" width="45" height="27" rx="13.500"/><rect class="pill" x="2864.500" y="766.500" width="45" height="27" rx="13.500"/>
    <rect class="pill" x="3012.500" y="821.500" width="45" height="27" rx="13.500"/><rect class="pill" x="3020.500" y="1071.500" width="45" height="27" rx="13.500"/><rect class="pill" x="2655.500" y="583.500" width="35" height="27" rx="13.500"/>
    <rect class="pill" x="3412.500" y="945.500" width="41" height="23"/>
    <g fill="#fff" stroke="#333" stroke-width="1.800" stroke-linejoin="round">
      <path d="M3027 342Q3031 345 3034 342 3039 340 3044 342 3047 345 3051 342L3054.500 347Q3051.500 352 3054.500 358 3055 366 3047 368 3041 369 3039 371 3037 369 3031 368 3023 366 3023.500 358 3026.500 352 3023.500 347Z"/>
      <path d="M3027 342Q3031 345 3034 342 3039 340 3044 342 3047 345 3051 342L3054.500 347Q3051.500 352 3054.500 358 3055 366 3047 368 3041 369 3039 371 3037 369 3031 368 3023 366 3023.500 358 3026.500 352 3023.500 347Z" transform="translate(65 235)"/>
    </g>
    <g class="num"><text x="2986" y="292.500">252</text><text x="2894" y="456.500">252</text><text x="2887" y="786.500">252</text><text x="3035" y="841.500">165</text><text x="3043" y="1091.500">165</text><text x="2673" y="603.500">30</text><text x="3039" y="362.500">91</text><text x="3104" y="597.500">89</text><text x="3433" y="963.500">090</text></g>
    <circle cx="3181" cy="541" r="12.300" fill="#fff" stroke="#b3a998" stroke-width="2"/>
    <path fill="#94694a" d="M3172.500 540 3181 535 3189.500 540 3181 544.500ZM3176 543.500 3181 546 3186 543.500V546Q3181 549.500 3176 546ZM3187.700 541H3189V547.500H3187Z"/>
  </svg>
  <footer class="botbar d-flex">
    <div class="plus d-flex align-items-center justify-content-center"><svg width="74" height="74" viewBox="0 0 74 74"><path fill="#dcddd0" d="M29.500 0H44.500V29.500H73.500V44.500H44.500V74H29.500V44.500H.5V29.500H29.500Z"/></svg></div>
    <div class="stats d-flex flex-column justify-content-center"><div>Game Code: <b>8A47FC03</b> Miles Travelled: <b>4.6mi</b></div><div>Flags Captured: <b>3</b> Time Elapsed: <b>4h 39m 27s</b></div></div>
  </footer>
</section>

<section class="screen row2 d-flex flex-column align-items-center">
  <h2 class="scr-title">Join a Game</h2>
  <div class="fields d-flex flex-column w-main">
    <div><label class="fld lift-3">Game Code</label><input class="form-control tile"></div>
    <div><label class="fld lift-7">Username</label><input class="form-control tile"></div>
    <div><label class="fld lift-5">Team Name</label><input class="form-control tile"></div>
  </div>
  <div class="actions d-flex"><button class="btn tile">Cancel</button><button class="btn tile nl-3">OK</button></div>
</section>

<section class="screen row2 d-flex flex-column align-items-center">
  <h2 class="scr-title">Messages</h2>
  <div class="msgs list-group w-main">
    <div class="list-group-item">MSG 1</div>
    <div class="list-group-item">MSG 2</div>
    <div class="list-group-item ell">...</div>
    <div class="list-group-item"></div>
    <div class="list-group-item"></div>
    <div class="list-group-item">Send Message</div>
  </div>
  <div class="actions wide d-flex"><button class="btn tile">Cancel</button><button class="btn tile nl-7">OK</button></div>
</section>

<section class="screen row2 d-flex flex-column align-items-center">
  <h2 class="scr-title">Objectives</h2>
  <p class="brief">The objective of the current&nbsp;<br>game type is to capture<br>as many flags as possible<br>for your team.<br><br>A flag is considered<br>captured when a team<br>member is within the<br>capture radius for more&nbsp;<br>than 60 seconds.</p>
  <div class="actions brief-end d-flex"><button class="btn tile">Cancel</button><button class="btn tile nr-3">OK</button></div>
</section>

<section class="screen screen-menu">
  <div class="menu list-group">
    <a class="list-group-item">Objectives</a>
    <a class="list-group-item">My Info</a>
    <a class="list-group-item">Messages</a>
    <a class="list-group-item">Settings</a>
    <a class="list-group-item">Quit Game</a>
  </div>
</section>
</body>
</html>
